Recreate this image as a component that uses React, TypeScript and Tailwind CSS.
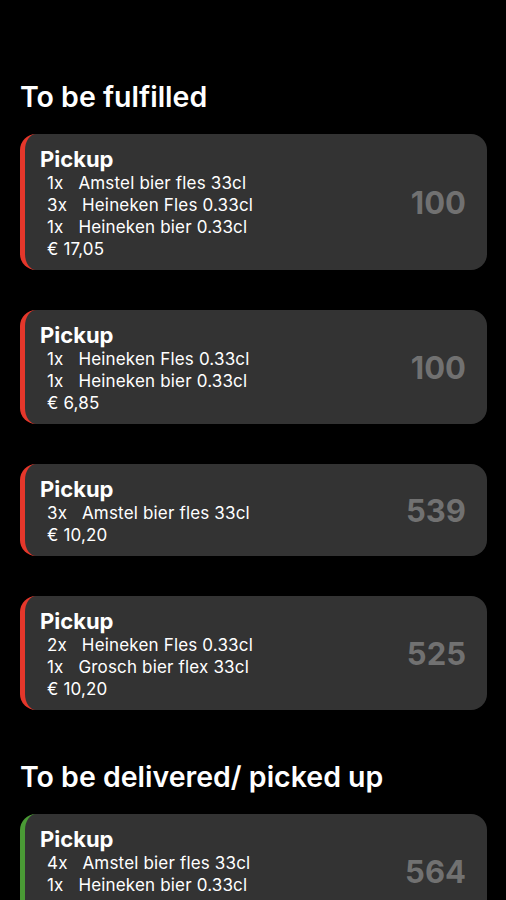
type Order = {
  id: number;
  items: string[];
  price: string;
  status: 'open' | 'done';
};

const toFulfill: Order[] = [
  {
    id: 100,
    items: ['1x   Amstel bier fles 33cl', '3x   Heineken Fles 0.33cl', '1x   Heineken bier 0.33cl'],
    price: '€ 17,05',
    status: 'open',
  },
  {
    id: 100,
    items: ['1x   Heineken Fles 0.33cl', '1x   Heineken bier 0.33cl'],
    price: '€ 6,85',
    status: 'open',
  },
  {
    id: 539,
    items: ['3x   Amstel bier fles 33cl'],
    price: '€ 10,20',
    status: 'open',
  },
  {
    id: 525,
    items: ['2x   Heineken Fles 0.33cl', '1x   Grosch bier flex 33cl'],
    price: '€ 10,20',
    status: 'open',
  },
];

const toDeliver: Order[] = [
  {
    id: 564,
    items: ['4x   Amstel bier fles 33cl', '1x   Heineken bier 0.33cl'],
    price: '€ 13,95',
    status: 'done',
  },
];

function OrderCard({ order }: { order: Order }) {
  return (
    <div
      className={`flex items-center rounded-[16px] bg-[#333333] border-l-[5px] pl-[15px] pr-[21px] pt-[12px] pb-[10px] ${
        order.status === 'open' ? 'border-[#e5372b]' : 'border-[#4a9a35]'
      }`}
    >
      <div className="flex-1">
        <div className="text-[22px] leading-[26px] font-bold text-white">Pickup</div>
        <div className="pl-[7px] text-[17px] leading-[22px] tracking-[0.01em] text-white">
          {order.items.map((item, i) => (
            <div key={i} className="whitespace-pre">
              {item}
            </div>
          ))}
          <div>{order.price}</div>
        </div>
      </div>
      {/* bestelnummer */}
      <div className="text-[31px] font-bold text-[#717171]">{order.id}</div>
    </div>
  );
}

export default function App() {
  return (
    <div
      className="min-h-[900px] bg-black px-[20px] pt-[80px] overflow-hidden"
      style={{ fontFamily: 'Inter, "Liberation Sans", sans-serif' }}
    >
      <h1 className="text-[28.5px] leading-[34px] font-semibold text-white">To be fulfilled</h1>
      <div className="mt-[20px] mr-[-1px] flex flex-col gap-[40px]">
        {toFulfill.map((o, i) => (
          <OrderCard key={i} order={o} />
        ))}
      </div>

      <h1 className="mt-[50px] text-[28.5px] leading-[34px] font-semibold text-white">
        To be delivered/ picked up
      </h1>
      <div className="mt-[20px] mr-[-1px] flex flex-col gap-[40px]">
        {toDeliver.map((o, i) => (
          <OrderCard key={i} order={o} />
        ))}
      </div>
    </div>
  );
}
